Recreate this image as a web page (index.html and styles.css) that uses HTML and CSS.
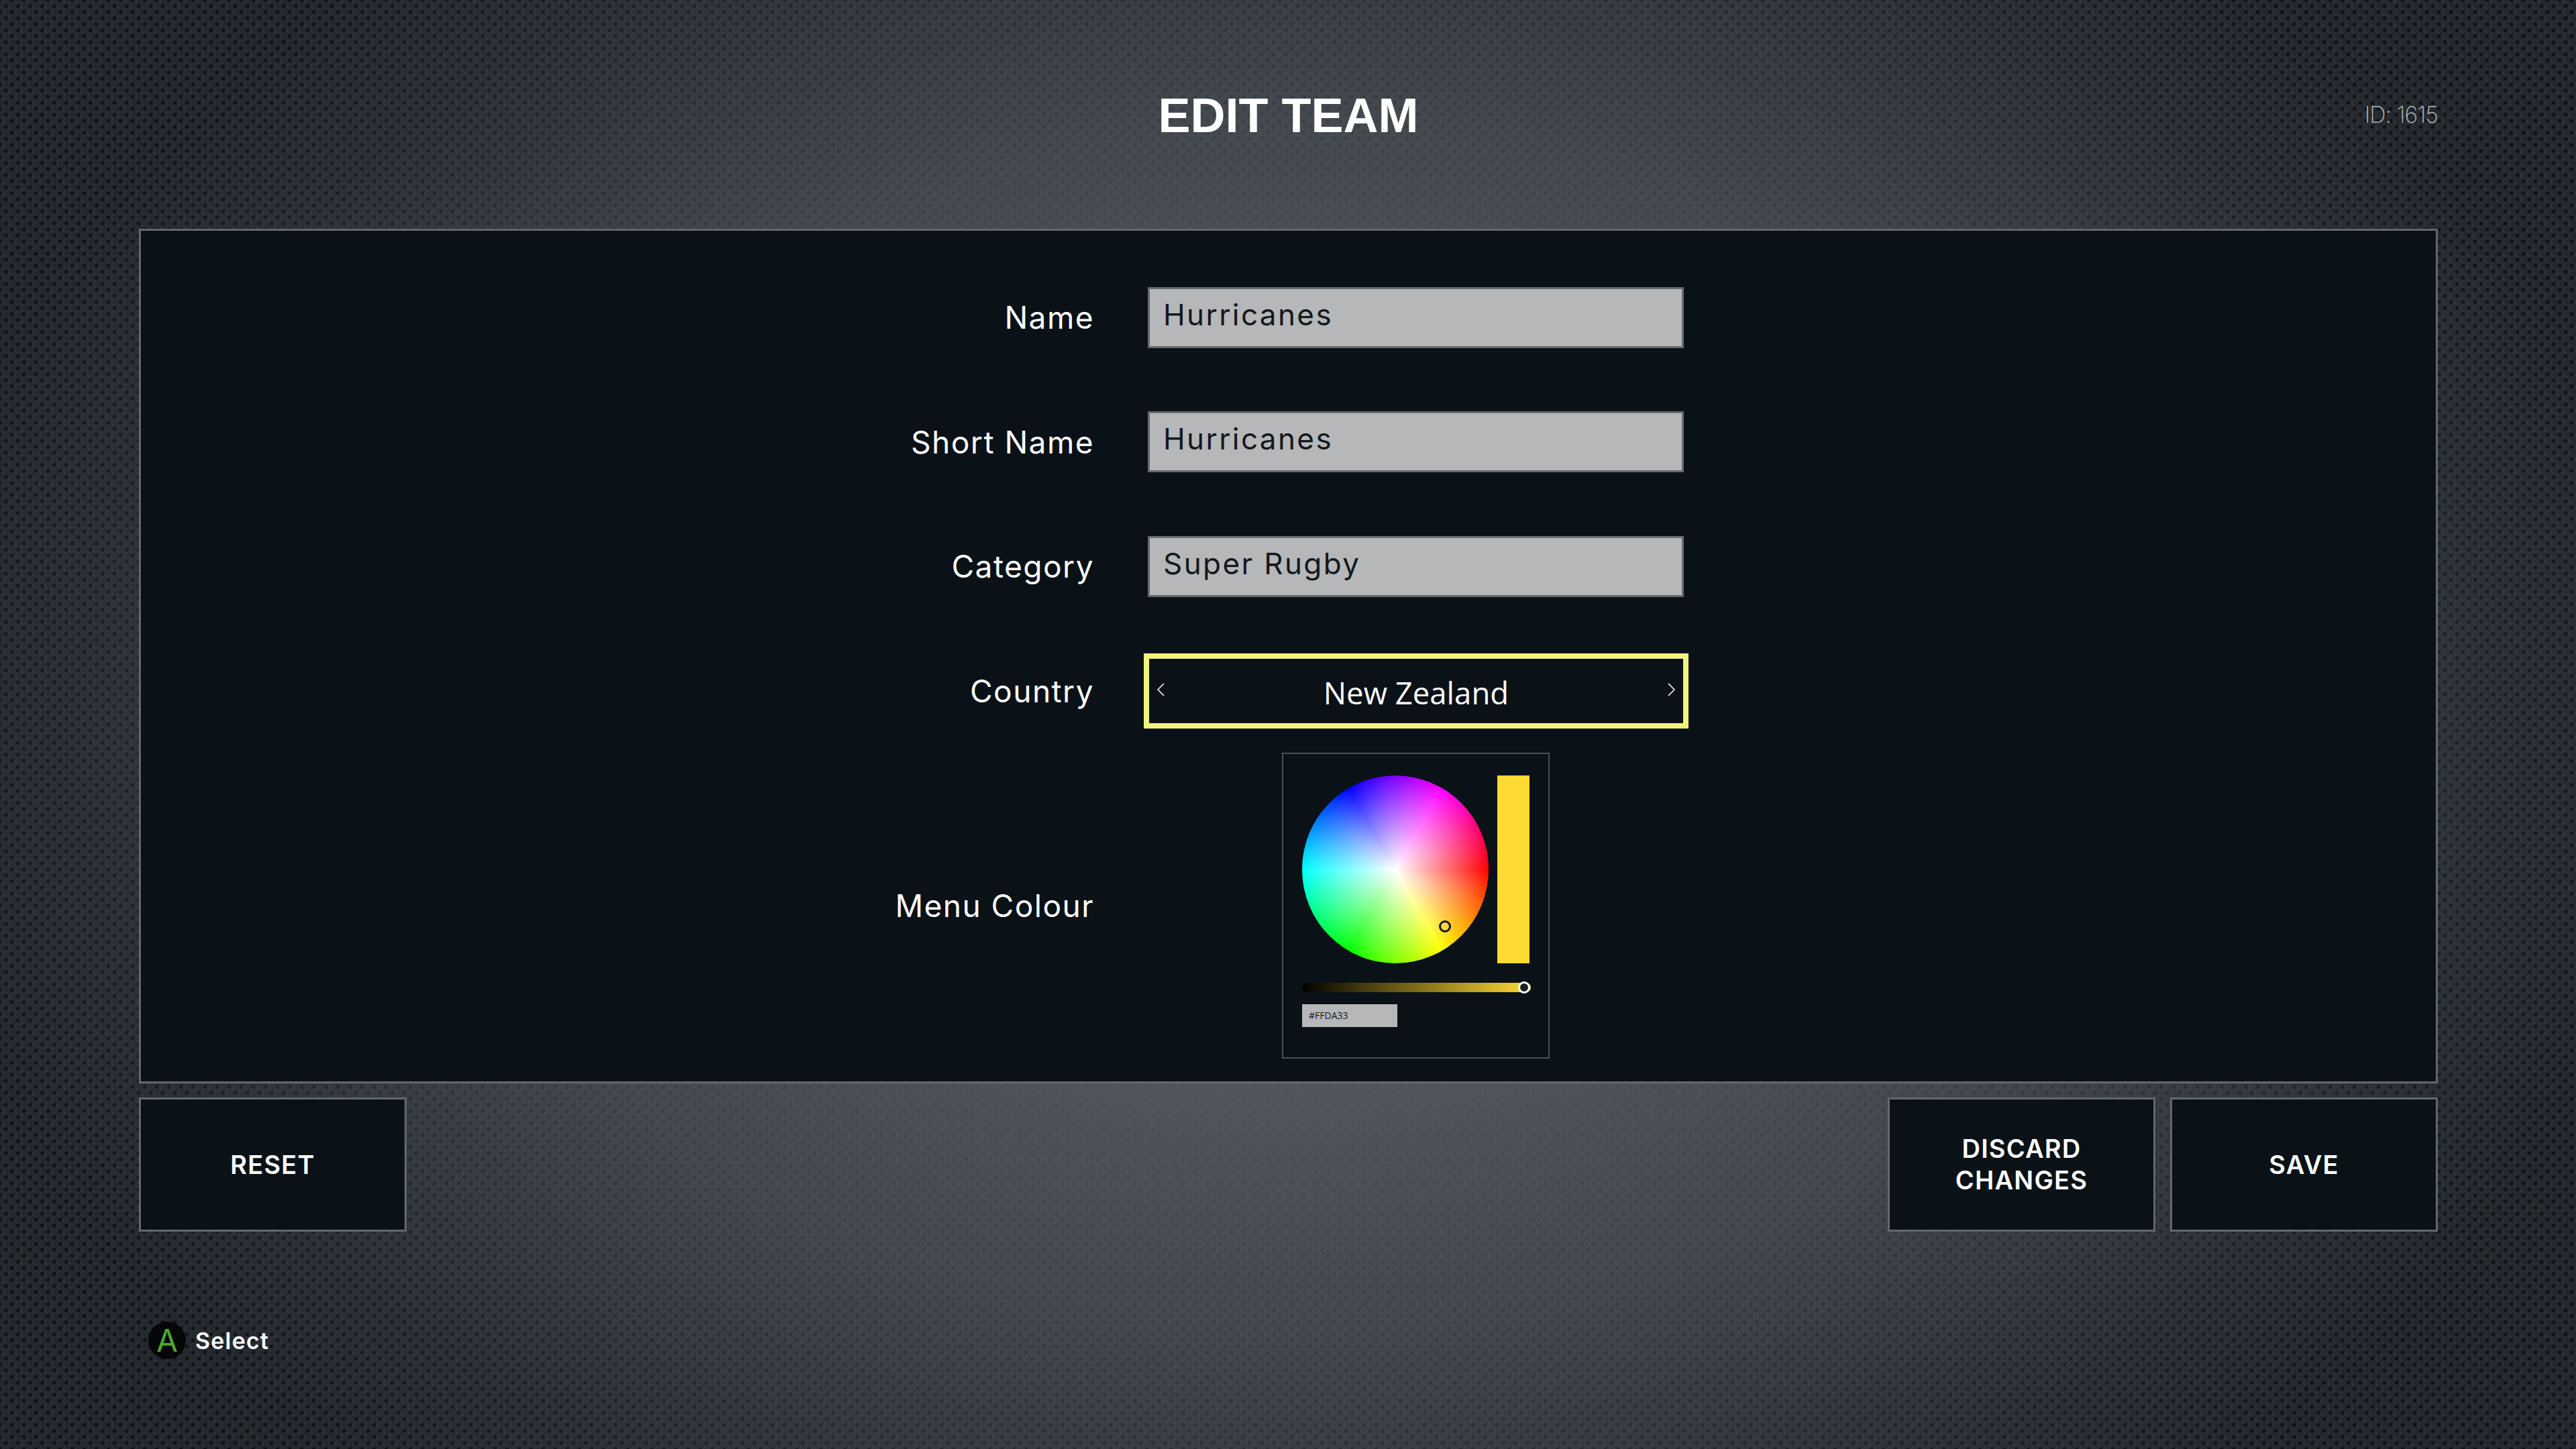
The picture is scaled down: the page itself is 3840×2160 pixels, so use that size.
FILE: index.html
```html
<!DOCTYPE html>
<html lang="en">
	<head>
		<meta charset="utf-8">
		<title>Edit Team</title>
		<link rel="stylesheet" href="styles.css">
	</head>
	<body>
		<main class="shell">

			<!-- title and team id -->
			<header class="top-bar">
				<span></span>
				<h1 class="page-title">EDIT TEAM</h1>
				<span class="team-id">ID: 1615</span>
			</header>

			<!-- team details form -->
			<section class="panel">
				<div class="row">
					<span class="label">Name</span>
					<div class="text-field">Hurricanes</div>
				</div>
				<div class="row">
					<span class="label">Short Name</span>
					<div class="text-field">Hurricanes</div>
				</div>
				<div class="row">
					<span class="label">Category</span>
					<div class="text-field">Super Rugby</div>
				</div>
				<div class="row row-country">
					<span class="label">Country</span>
					<div class="selector">
						<svg class="chevron" viewBox="0 0 12 20"><path d="M11 1 L2 10 L11 19"/></svg>
						<span class="selector-value">New Zealand</span>
						<svg class="chevron" viewBox="0 0 12 20"><path d="M1 1 L10 10 L1 19"/></svg>
					</div>
				</div>
				<div class="row row-picker">
					<span class="label">Menu Colour</span>
					<div class="picker">
						<div class="picker-top">
							<div class="wheel">
								<span class="wheel-marker"></span>
							</div>
							<div class="swatch"></div>
						</div>
						<div class="slider">
							<span class="slider-handle"></span>
						</div>
						<div class="hex-field">#FFDA33</div>
					</div>
				</div>
			</section>

			<!-- action buttons -->
			<div class="actions">
				<div class="action">RESET</div>
				<div class="action action-push">DISCARD<br>CHANGES</div>
				<div class="action">SAVE</div>
			</div>

			<!-- controller hint -->
			<footer class="hint">
				<span class="hint-badge">A</span>
				<span class="hint-text">Select</span>
			</footer>

		</main>
	</body>
</html>
```

FILE: styles.css
```css
/*
	page background: a spotlight that fades out over a woven texture
*/

body {
	margin: 0;
	height: 2160px;
	overflow: hidden;
	color: #fff;
	background-color: #23282e;
	background-image:
		radial-gradient(ellipse 1800px 1300px at 50% 50%, rgba(86, 92, 98, 0.95) 0, rgba(86, 92, 98, 0.95) 35%, rgba(86, 92, 98, 0.62) 70%, rgba(86, 92, 98, 0.16) 100%, rgba(86, 92, 98, 0) 115%),
		radial-gradient(circle at 9px 9px, rgba(0, 0, 0, 0.6) 0, rgba(0, 0, 0, 0.6) 2px, transparent 4px),
		radial-gradient(circle at 0 0, rgba(0, 0, 0, 0.6) 0, rgba(0, 0, 0, 0.6) 2px, transparent 4px),
		radial-gradient(circle at 18px 0, rgba(0, 0, 0, 0.6) 0, rgba(0, 0, 0, 0.6) 2px, transparent 4px),
		radial-gradient(circle at 0 18px, rgba(0, 0, 0, 0.6) 0, rgba(0, 0, 0, 0.6) 2px, transparent 4px),
		radial-gradient(circle at 18px 18px, rgba(0, 0, 0, 0.6) 0, rgba(0, 0, 0, 0.6) 2px, transparent 4px),
		repeating-linear-gradient(45deg, rgba(255, 255, 255, 0.03) 0, rgba(255, 255, 255, 0.03) 3px, transparent 3px, transparent 12.73px),
		repeating-linear-gradient(-45deg, rgba(255, 255, 255, 0.02) 0, rgba(255, 255, 255, 0.02) 3px, transparent 3px, transparent 12.73px);
	background-size: auto, 18px 18px, 18px 18px, 18px 18px, 18px 18px, 18px 18px, auto, auto;
}

.shell {
	padding: 0 206px 0 207px;
}

/*
	header
*/

.top-bar {
	display: grid;
	grid-template-columns: 1fr auto 1fr;
	align-items: center;
	height: 341px;
}

.page-title {
	margin: 2px 0 0 0;
	font-family: "Liberation Sans", sans-serif;
	font-size: 72px;
	font-weight: 700;
	line-height: 80px;
}

.team-id {
	justify-self: end;
	font-family: Inter, sans-serif;
	font-size: 34px;
	font-weight: 200;
	letter-spacing: -1px;
	color: #b4b8bb;
}

/*
	main panel
*/

.panel {
	box-sizing: border-box;
	height: 1274px;
	padding-top: 73px;
	background-color: #0a1117;
	border: 3px solid #62686e;
}

.row {
	display: grid;
	grid-template-columns: 1419px 812px;
	column-gap: 76px;
	align-items: center;
	height: 112px;
	margin-bottom: 73.5px;
}

.row-country {
	margin-bottom: 36px;
}

.row-picker {
	height: 456px;
	margin-bottom: 0;
}

.label {
	margin-right: -2px;
	text-align: right;
	font-family: Inter, sans-serif;
	font-size: 46px;
	letter-spacing: 1.5px;
	color: #fff;
}

.text-field {
	box-sizing: border-box;
	width: 799px;
	height: 91px;
	margin-left: 6px;
	padding: 7px 0 0 20px;
	background-color: #b5b7b9;
	border: 3px solid #666b70;
	font-family: Inter, sans-serif;
	font-size: 44px;
	letter-spacing: 2.4px;
	line-height: 62px;
	color: #14181c;
}

/*
	country selector, currently focused
*/

.selector {
	box-sizing: border-box;
	display: flex;
	align-items: center;
	justify-content: space-between;
	height: 112px;
	padding: 0 11px 4px 11px;
	border: 8px solid #f3f57a;
}

.selector-value {
	font-family: "Open Sans", sans-serif;
	font-size: 45.5px;
	padding-top: 8px;
}

.chevron {
	width: 12px;
	height: 20px;
	fill: none;
	stroke: #fff;
	stroke-width: 1.5;
}

/*
	colour picker
*/

.picker {
	box-sizing: border-box;
	width: 399px;
	height: 456px;
	margin-left: 206px;
	padding: 32px 28px 0 28px;
	border: 2px solid #4b5157;
}

.picker-top {
	display: flex;
	gap: 13px;
}

.wheel {
	position: relative;
	width: 281px;
	height: 280px;
	border-radius: 50%;
	background-image:
		radial-gradient(closest-side, #fff, rgba(255, 255, 255, 0)),
		conic-gradient(from 90deg, #f00, #ff0, #0f0, #0ff, #00f, #f0f, #f00);
}

.wheel-marker {
	position: absolute;
	left: 204px;
	top: 216px;
	box-sizing: border-box;
	width: 18px;
	height: 18px;
	border-radius: 50%;
	background-color: #ffda33;
	border: 3px solid #14181c;
}

.swatch {
	width: 48px;
	height: 280px;
	background-color: #ffda33;
}

.slider {
	position: relative;
	width: 341px;
	height: 14px;
	margin-top: 29px;
	border-radius: 7px;
	background-image: linear-gradient(to right, #000, #ffda33);
}

.slider-handle {
	position: absolute;
	right: 1px;
	top: -2px;
	box-sizing: border-box;
	width: 18px;
	height: 18px;
	border-radius: 50%;
	background-color: #1d2023;
	border: 3px solid #fff;
}

.hex-field {
	box-sizing: border-box;
	width: 142px;
	height: 34px;
	margin-top: 18px;
	padding-left: 10px;
	background-color: #b5b7b9;
	font-family: "Open Sans", sans-serif;
	font-size: 14px;
	line-height: 34px;
	color: #14181c;
}

/*
	buttons under the panel
*/

.actions {
	display: flex;
	gap: 22px;
	margin-top: 21px;
}

.action {
	box-sizing: border-box;
	display: flex;
	align-items: center;
	justify-content: center;
	width: 399px;
	height: 200px;
	background-color: #0a1117;
	border: 3px solid #62686e;
	font-family: Inter, sans-serif;
	font-size: 38px;
	font-weight: 600;
	letter-spacing: 1.2px;
	line-height: 47px;
	text-align: center;
}

.action-push {
	margin-left: auto;
}

/*
	controller hint
*/

.hint {
	display: flex;
	align-items: center;
	gap: 14px;
	margin-top: 134px;
	margin-left: 14px;
}

.hint-badge {
	display: flex;
	align-items: center;
	justify-content: center;
	width: 56px;
	height: 56px;
	border-radius: 50%;
	background-color: #050607;
	font-family: Inter, sans-serif;
	font-size: 46px;
	color: #4ea82e;
}

.hint-text {
	font-family: Inter, sans-serif;
	font-size: 34px;
	font-weight: 600;
	letter-spacing: 1.2px;
}
```
